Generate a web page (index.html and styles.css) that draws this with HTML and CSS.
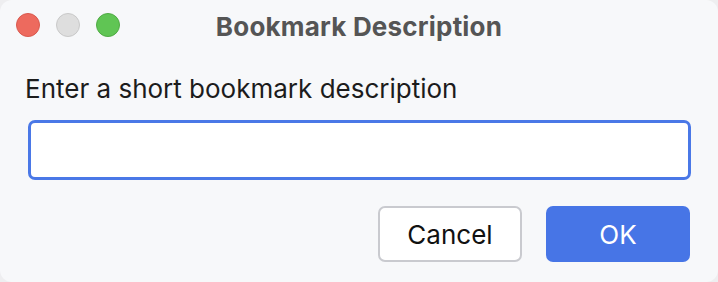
FILE: index.html
```html
<!DOCTYPE html>
<html lang="en">

<head>
    <meta charset="UTF-8">
    <meta name="viewport" content="width=device-width, initial-scale=1.0">
    <title>Bookmark Description</title>
    <link rel="stylesheet" href="styles.css">
</head>

<body>

    <div class="window">
        <div class="titlebar">
            <div class="lights">
                <span class="light red"></span>
                <span class="light gray"></span>
                <span class="light green"></span>
            </div>
            <div class="title">Bookmark Description</div>
        </div>

        <div class="content">
            <label class="label" for="desc">Enter a short bookmark description</label>
            <input class="field" id="desc" type="text">

            <div class="buttons">
                <button class="btn cancel">Cancel</button>
                <button class="btn ok">OK</button>
            </div>
        </div>
    </div>

</body>

</html>
```

FILE: styles.css
```css
/* Base */
body {
    margin: 0;
    padding: 0;
    background: #eeeef0;
    font-family: Inter, "Noto Sans", sans-serif;
    color: #1c1c1c;
}

.window {
    width: 718px;
    height: 282px;
    box-sizing: border-box;
    background: #f7f8fa;
    border-radius: 12px;
    overflow: hidden;
}

.titlebar {
    height: 50px;
    position: relative;
    display: flex;
    align-items: center;
    justify-content: center;
}

.lights {
    position: absolute;
    left: 16px;
    top: 13px;
    display: flex;
    gap: 16px;
}

.light {
    width: 24px;
    height: 24px;
    border-radius: 50%;
    box-sizing: border-box;
}

.light.red {
    background: #ed6a5e;
    border: 1px solid #d9594e;
}

.light.gray {
    background: #dedede;
    border: 1px solid #c9c9c9;
}

.light.green {
    background: #60c554;
    border: 1px solid #50ab44;
}

.title {
    font-size: 26px;
    font-weight: 700;
    color: #555555;
    letter-spacing: 0.2px;
    margin-top: 2px;
}

.content {
    padding: 24px 27px 0 25px;
    display: flex;
    flex-direction: column;
}

.label {
    font-size: 26px;
    line-height: 30px;
    height: 30px;
}

.field {
    margin: 16px 0 0 3px;
    height: 60px;
    box-sizing: border-box;
    border: 3px solid #4a78e7;
    border-radius: 7px;
    background: #ffffff;
    outline: none;
    font-family: inherit;
    font-size: 25px;
    padding: 0 10px;
}

.buttons {
    margin-top: 26px;
    display: flex;
    justify-content: flex-end;
    gap: 24px;
    padding-right: 1px;
}

.btn {
    width: 144px;
    height: 56px;
    box-sizing: border-box;
    border-radius: 7px;
    font-family: inherit;
    font-size: 26px;
    cursor: pointer;
}

.btn.cancel {
    background: #ffffff;
    border: 2px solid #c9cacf;
    color: #111111;
}

.btn.ok {
    background: #4775e6;
    border: none;
    color: #ffffff;
}
```
